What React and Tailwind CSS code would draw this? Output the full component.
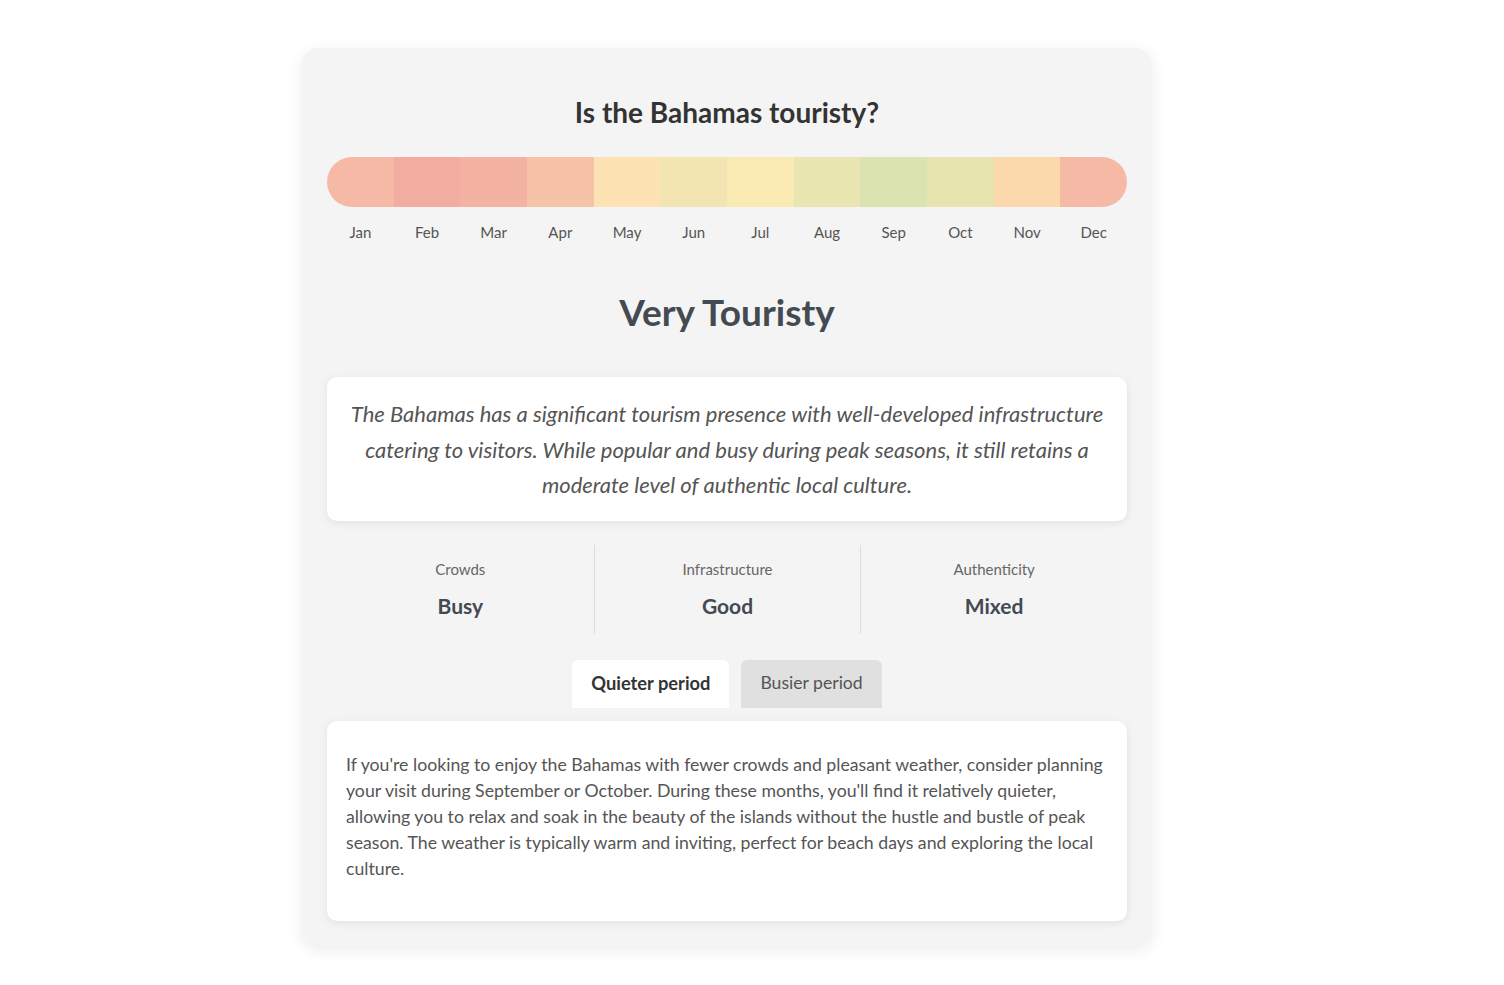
const MONTHS = [
  { m: 'Jan', c: 'bg-[#f6b9a6]' },
  { m: 'Feb', c: 'bg-[#f3ada0]' },
  { m: 'Mar', c: 'bg-[#f4b2a3]' },
  { m: 'Apr', c: 'bg-[#f6c3a8]' },
  { m: 'May', c: 'bg-[#fde3b3]' },
  { m: 'Jun', c: 'bg-[#f2e5b2]' },
  { m: 'Jul', c: 'bg-[#f9e9b3]' },
  { m: 'Aug', c: 'bg-[#eae6b2]' },
  { m: 'Sep', c: 'bg-[#dbe3b0]' },
  { m: 'Oct', c: 'bg-[#e7e4b0]' },
  { m: 'Nov', c: 'bg-[#fcd9ad]' },
  { m: 'Dec', c: 'bg-[#f6b9a6]' },
];

const STATS = [
  { label: 'Crowds', value: 'Busy' },
  { label: 'Infrastructure', value: 'Good' },
  { label: 'Authenticity', value: 'Mixed' },
];

export default function App() {
  return (
    <div className="min-h-screen bg-white pt-[48px] font-['Lato','Noto_Sans',sans-serif]">
      <div className="ml-[302px] w-[850px] rounded-[16px] bg-[#f4f4f4] px-[25px] pb-[25px] pt-[44px] shadow-[0_4px_16px_rgba(0,0,0,0.08)]">
        <h1 className="text-center text-[28px] font-bold leading-[40px] text-[#333]">Is the Bahamas touristy?</h1>

        {/* Month bar */}
        <div className="mt-[25px] flex h-[50px] overflow-hidden rounded-full">
          {MONTHS.map(x => (
            <div key={x.m} className={`flex-1 ${x.c}`} />
          ))}
        </div>
        <div className="mt-[16px] flex">
          {MONTHS.map(x => (
            <div key={x.m} className="flex-1 text-center text-[15px] leading-[18px] text-[#555]">{x.m}</div>
          ))}
        </div>

        <h2 className="mt-[47px] text-center text-[37px] font-bold leading-[48px] text-[#444a52]">Very Touristy</h2>

        {/* Summary */}
        <div className="mt-[41px] rounded-[10px] bg-white px-[20px] pb-[18px] pt-[19px] text-center text-[22px] italic leading-[35.5px] text-[#555] shadow-[0_2px_8px_rgba(0,0,0,0.08)]">
          The Bahamas has a significant tourism presence with well-developed infrastructure catering to visitors. While popular and busy during peak seasons, it still retains a moderate level of authentic local culture.
        </div>

        {/* Stats */}
        <div className="mt-[24px] grid grid-cols-3">
          {STATS.map((s, i) => (
            <div key={s.label} className={`flex h-[89px] flex-col items-center pt-[15px] ${i > 0 ? 'border-l border-[#ddd]' : ''}`}>
              <span className="text-[15px] leading-[18px] text-[#666]">{s.label}</span>
              <span className="mt-[15px] text-[21px] font-bold leading-[26px] text-[#444a52]">{s.value}</span>
            </div>
          ))}
        </div>

        {/* Tabs */}
        <div className="mt-[26px] flex justify-center gap-[12px]">
          <button className="h-[48px] rounded-t-[6px] bg-white px-[19px] text-[18.3px] font-bold text-[#333]">Quieter period</button>
          <button className="h-[48px] rounded-t-[6px] bg-[#e0e0e0] px-[19px] text-[17.6px] text-[#555]">Busier period</button>
        </div>

        {/* Detail */}
        <div className="mt-[13px] rounded-[10px] bg-white px-[19px] pb-[38px] pt-[31px] text-[17.7px] leading-[26.2px] text-[#555] shadow-[0_2px_8px_rgba(0,0,0,0.08)]">
          If you're looking to enjoy the Bahamas with fewer crowds and pleasant weather, consider planning your visit during September or October. During these months, you'll find it relatively quieter, allowing you to relax and soak in the beauty of the islands without the hustle and bustle of peak season. The weather is typically warm and inviting, perfect for beach days and exploring the local culture.
        </div>
      </div>
    </div>
  );
}
